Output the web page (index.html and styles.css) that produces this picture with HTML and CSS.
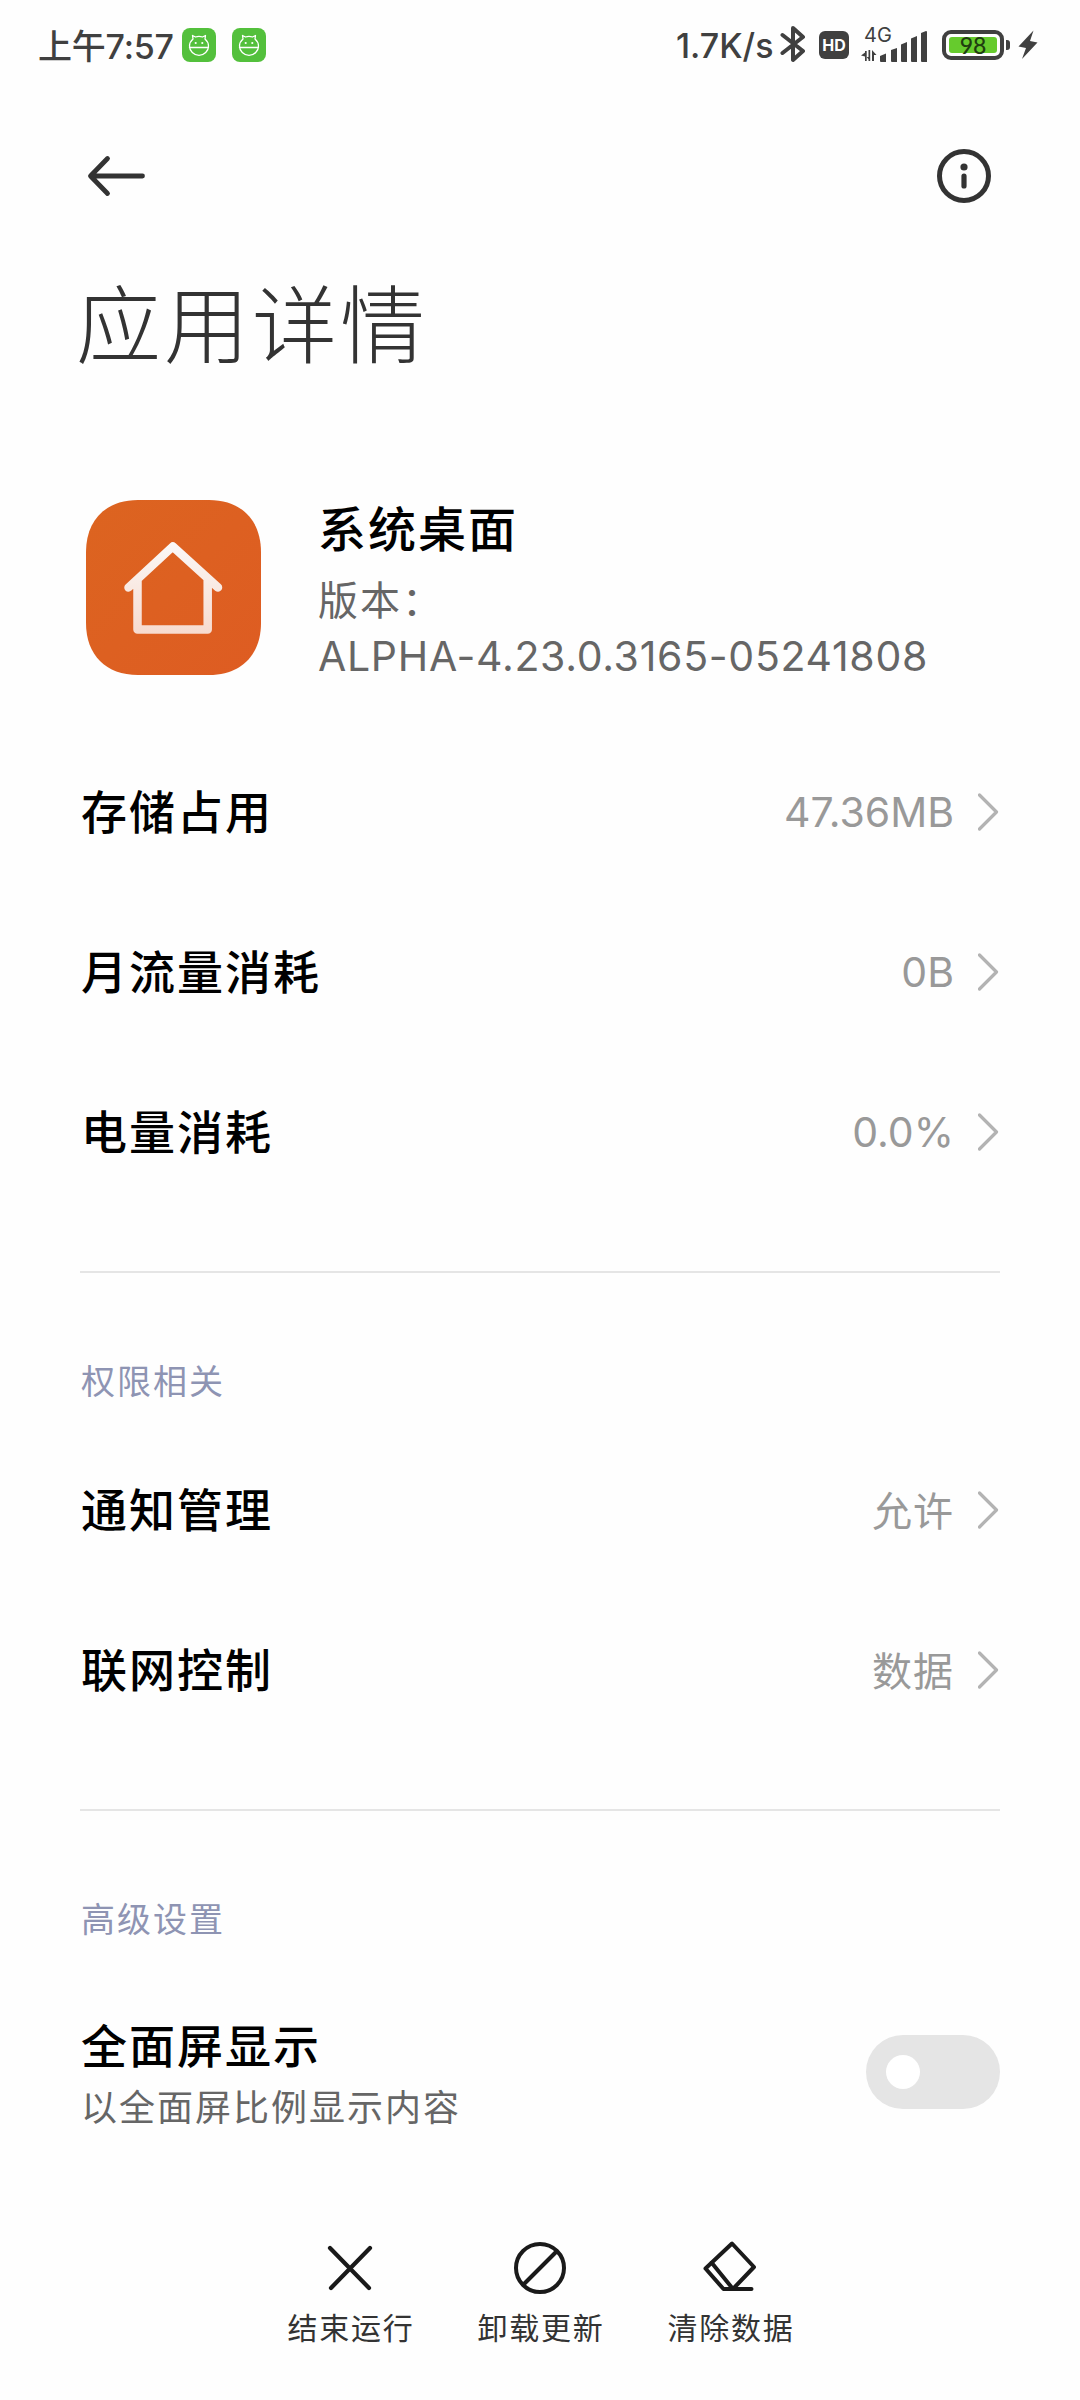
FILE: index.html
```html
<!DOCTYPE html>
<html lang="zh-CN">
<head>
    <meta charset="UTF-8">
    <meta name="viewport" content="width=device-width, initial-scale=1.0">
    <title>应用详情</title>
    <link rel="stylesheet" href="styles.css">
</head>
<body>
    <!-- shared shapes -->
    <svg width="0" height="0" class="defs">
        <symbol id="chevron" viewBox="0 0 22 40">
            <path d="M1.5 3 L18.5 20 L1.5 37" fill="none" stroke="#b3b3b3" stroke-width="3.2" stroke-linecap="round" stroke-linejoin="round"/>
        </symbol>
        <symbol id="droid" viewBox="0 0 34 34">
            <g fill="none" stroke="#fff" stroke-width="1.3" stroke-linecap="round" stroke-linejoin="round">
                <path d="M11 11 L10.5 7.5 L13.5 9 Q17 7.8 20.5 9 L23.5 7.5 L23 11 Q26.5 14 26.5 18 A9.5 9.3 0 0 1 7.5 18 Q7.5 14 11 11 Z"/>
                <path d="M7.5 19.5 H26.5"/>
            </g>
            <circle cx="13.7" cy="15" r="1.1" fill="#fff"/>
            <circle cx="20.3" cy="15" r="1.1" fill="#fff"/>
        </symbol>
    </svg>

    <header class="status-bar">
        <span class="time">上午7:57</span>
        <svg class="notif" width="34" height="34"><use href="#droid"/></svg>
        <svg class="notif" width="34" height="34"><use href="#droid"/></svg>

        <span class="speed">1.7K/s</span>
        <svg class="bluetooth" width="26" height="40" viewBox="0 0 26 40">
            <path d="M2.5 11 L23 27 L13 36 V4 L23 13 L2.5 29" fill="none" stroke="#404040" stroke-width="4" stroke-linecap="round" stroke-linejoin="round"/>
        </svg>
        <span class="hd">HD</span>
        <div class="signal">
            <span class="net">4G</span>
            <svg width="68" height="36" viewBox="0 0 68 36">
                <g fill="#404040">
                    <path d="M4 24 h1.7 v10 h-1.7 z M0 28.5 l4 -3 v4 z"/>
                    <path d="M7.5 23 h1.7 v11 h-1.7 z M5.7 30 h3 v4 z"/>
                    <path d="M11 23 l4.5 5 h-2.5 v6 h-2 z"/>
                    <path d="M19 29 L25 26.500 V35 H20 Q19 35 19 34 Z"/>
                    <path d="M30 23 L36 21 V35 H31 Q30 35 30 34 Z"/>
                    <path d="M40 17.500 L46 15 V35 H41 Q40 35 40 34 Z"/>
                    <path d="M50 11.500 L56 9 V35 H51 Q50 35 50 34 Z"/>
                    <path d="M60 6 L65 4 Q66 4 66 5 V35 H61 Q60 35 60 34 Z"/>
                </g>
            </svg>
        </div>
        <span class="battery"><span class="level">98</span></span>
        <span class="battery-tip"></span>
        <svg class="bolt" width="20" height="30" viewBox="0 0 20 30">
            <path d="M15.5 0.5 L0.5 16.5 L8 18 L4 29 L19.5 12.5 L12 11 Z" fill="#404040"/>
        </svg>
    </header>

    <nav class="top-nav">
        <svg width="60" height="44" viewBox="0 0 60 44">
            <path d="M21.5 4.5 L4.5 22 L21.5 39.5 M5 22 H56.5" fill="none" stroke="#333" stroke-width="4.8" stroke-linecap="round" stroke-linejoin="round"/>
        </svg>
        <svg width="54" height="54" viewBox="0 0 54 54">
            <circle cx="27" cy="27" r="24.5" fill="none" stroke="#333" stroke-width="5"/>
            <circle cx="27" cy="18" r="3.6" fill="#333"/>
            <path d="M27 27 V37" stroke="#333" stroke-width="5.2" stroke-linecap="round"/>
        </svg>
    </nav>

    <h1>应用详情</h1>

    <main>
        <section class="app">
            <svg class="app-icon" width="175" height="175" viewBox="0 0 175 175">
                <defs>
                    <linearGradient id="orange" x1="0" y1="0" x2="1" y2="1">
                        <stop offset="0" stop-color="#dc6420"/>
                        <stop offset="1" stop-color="#de5c22"/>
                    </linearGradient>
                    <linearGradient id="house" gradientUnits="userSpaceOnUse" x1="0" y1="42" x2="0" y2="134">
                        <stop offset="0" stop-color="#fbf8f7"/>
                        <stop offset="1" stop-color="#f7dbcf"/>
                    </linearGradient>
                </defs>
                <path d="M0 52 C0 20 20 0 52 0 H123 C155 0 175 20 175 52 V123 C175 155 155 175 123 175 H52 C20 175 0 155 0 123 Z" fill="url(#orange)"/>
                <path d="M42.5 87.5 L86.8 46.5 L132 87.5 M51.5 80 V129.5 H121.7 V80" fill="none" stroke="url(#house)" stroke-width="8.5" stroke-linecap="round" stroke-linejoin="round"/>
            </svg>
            <div class="app-info">
                <h2>系统桌面</h2>
                <p class="version">版本：</p>
                <p class="build">ALPHA-4.23.0.3165-05241808</p>
            </div>
        </section>

        <ul class="list">
            <li><span class="label">存储占用</span><span class="value">47.36MB</span><svg width="22" height="40"><use href="#chevron"/></svg></li>
            <li><span class="label">月流量消耗</span><span class="value">0B</span><svg width="22" height="40"><use href="#chevron"/></svg></li>
            <li><span class="label">电量消耗</span><span class="value">0.0%</span><svg width="22" height="40"><use href="#chevron"/></svg></li>
        </ul>

        <h3>权限相关</h3>
        <ul class="list">
            <li><span class="label">通知管理</span><span class="value cn">允许</span><svg width="22" height="40"><use href="#chevron"/></svg></li>
            <li><span class="label">联网控制</span><span class="value cn">数据</span><svg width="22" height="40"><use href="#chevron"/></svg></li>
        </ul>

        <h3>高级设置</h3>
        <div class="setting">
            <div class="setting-text">
                <span class="label">全面屏显示</span>
                <span class="hint">以全面屏比例显示内容</span>
            </div>
            <span class="switch"></span>
        </div>
    </main>

    <footer class="actions">
        <div class="action">
            <svg width="60" height="60" viewBox="0 0 60 60">
                <path d="M10 10 L49 50 M50 10 L11 50" fill="none" stroke="#1a1a1a" stroke-width="4.2" stroke-linecap="round"/>
            </svg>
            <span>结束运行</span>
        </div>
        <div class="action">
            <svg width="60" height="60" viewBox="0 0 60 60">
                <circle cx="30" cy="30" r="24" fill="none" stroke="#1a1a1a" stroke-width="4"/>
                <path d="M47 13 L13 47" stroke="#1a1a1a" stroke-width="4"/>
            </svg>
            <span>卸载更新</span>
        </div>
        <div class="action">
            <svg width="60" height="60" viewBox="0 0 60 60">
                <path d="M32 5.5 L54 29 L33 51 H51.5 M33 51 H23.5 L5.5 30.5 L32 5.5 M11.5 24.5 L33 51" fill="none" stroke="#1a1a1a" stroke-width="4" stroke-linecap="round" stroke-linejoin="round"/>
            </svg>
            <span>清除数据</span>
        </div>
    </footer>
</body>
</html>
```

FILE: styles.css
```css
* {
    box-sizing: border-box;
    margin: 0;
    padding: 0;
}
body {
    width: 1080px;
    height: 2400px;
    background-color: #fefefe;
    color: #000;
    font-family: Inter, "Noto Sans CJK SC", sans-serif;
    display: flex;
    flex-direction: column;
    overflow: hidden;
}
svg {
    display: block;
    flex-shrink: 0;
}
.defs {
    position: absolute;
}

/* status bar */
.status-bar {
    height: 90px;
    padding-left: 38px;
    display: flex;
    align-items: center;
    color: #404040;
    font-size: 34px;
    font-weight: 500;
    white-space: nowrap;
}
.time {
    width: 144px;
    padding-bottom: 1px;
    letter-spacing: -0.2px;
}
.notif {
    margin-right: 16px;
    border-radius: 8px;
    background-color: #53c03c;
}
.speed {
    width: 104px;
    margin-left: 394px;
}
.bluetooth {
    margin-top: -2px;
}
.hd {
    width: 30px;
    height: 28px;
    margin-left: 13px;
    border-radius: 6px;
    background-color: #404040;
    color: #fff;
    font-size: 16px;
    font-weight: 700;
    line-height: 28px;
    text-align: center;
}
.signal {
    position: relative;
    margin-left: 12px;
}
.net {
    position: absolute;
    left: 3px;
    top: -5px;
    font-size: 20px;
    font-weight: 400;
    line-height: 26px;
}
.battery {
    width: 62px;
    height: 30px;
    margin-left: 13px;
    padding: 3px;
    border: 4px solid #404040;
    border-radius: 9px;
}
.level {
    display: block;
    height: 16px;
    border-radius: 3px;
    background-color: #66cb2d;
    color: #1f3d10;
    font-family: Lato, sans-serif;
    font-size: 23px;
    line-height: 17px;
    text-align: center;
}
.battery-tip {
    width: 4px;
    height: 10px;
    margin-left: 2px;
    border-radius: 0 3px 3px 0;
    background-color: #404040;
}
.bolt {
    margin-left: 8px;
}

/* page header */
.top-nav {
    height: 172px;
    padding: 0 89px 0 86px;
    display: flex;
    align-items: center;
    justify-content: space-between;
}
h1 {
    height: 235px;
    margin-top: 1px;
    padding-left: 76px;
    color: #333;
    font-size: 85px;
    font-weight: 300;
    letter-spacing: 3px;
    line-height: 128px;
}
main {
    padding: 0 80px;
}

/* app summary */
.app {
    height: 234px;
    padding: 2px 0 0 6px;
    display: flex;
    gap: 57px;
}
h2 {
    font-size: 48px;
    font-weight: 500;
    letter-spacing: 2px;
    line-height: 60px;
}
.app-info {
    color: #666;
}
.app-info h2 {
    color: #000;
}
.version {
    margin-top: 13px;
    font-size: 40px;
    letter-spacing: 2px;
    line-height: 56px;
}
.build {
    font-size: 41px;
    letter-spacing: 0.7px;
    line-height: 55px;
}

/* rows */
.list {
    list-style: none;
    padding-bottom: 59px;
    border-bottom: 2px solid #e5e5e5;
}
.list li {
    height: 160px;
    display: flex;
    align-items: center;
}
.label {
    padding-left: 1px;
    font-size: 46px;
    font-weight: 500;
    letter-spacing: 2px;
    line-height: 60px;
}
.value {
    margin-left: auto;
    margin-right: 24px;
    color: #999;
    font-size: 41px;
}
.value.cn {
    padding-bottom: 2px;
    font-size: 40px;
    letter-spacing: 1px;
}
h3 {
    height: 157px;
    padding: 84px 0 0 1px;
    color: #8e94b3;
    font-size: 34px;
    font-weight: 400;
    letter-spacing: 2px;
    line-height: 50px;
}
.setting {
    display: flex;
    align-items: center;
    justify-content: space-between;
    height: 210px;
    padding-bottom: 2px;
}
.setting-text {
    display: flex;
    flex-direction: column;
    padding-top: 11px;
}
.hint {
    padding-left: 1px;
    color: #666;
    font-size: 36px;
    letter-spacing: 2px;
    line-height: 64px;
}
.switch {
    width: 134px;
    height: 74px;
    padding: 20px;
    border-radius: 37px;
    background-color: #e5e5e5;
}
.switch::before {
    content: "";
    display: block;
    width: 34px;
    height: 34px;
    border-radius: 50%;
    background-color: #fff;
}

/* bottom actions */
.actions {
    margin-top: 60px;
    display: flex;
    justify-content: center;
}
.action {
    width: 190px;
    display: flex;
    flex-direction: column;
    align-items: center;
    color: #333;
    font-size: 30px;
    letter-spacing: 1.8px;
    line-height: 60px;
}
.action span {
    padding-left: 2px;
}
```
